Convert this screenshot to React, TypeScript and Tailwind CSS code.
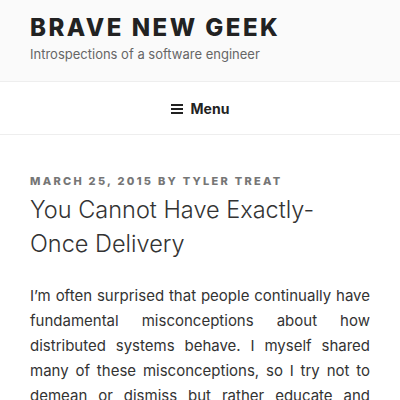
import React from "react";

const lines = [
  "I\u2019m often surprised that people continually have",
  "fundamental misconceptions about how",
  "distributed systems behave. I myself shared",
  "many of these misconceptions, so I try not to",
  "demean or dismiss but rather educate and",
];

export default function App() {
  return (
    <div className="w-[400px] h-[400px] overflow-hidden bg-white" style={{ fontFamily: "Inter, 'Noto Sans', sans-serif" }}>
      <header className="bg-[#fafafa] border-b border-[#eee] px-[30px] pt-[15px] pb-[17px]">
        <h1 className="text-[24px] leading-[26px] font-extrabold uppercase tracking-[0.104em] text-[#222]">Brave New Geek</h1>
        <p className="mt-[3px] text-[13px] leading-[20px] text-[#666]">Introspections of a software engineer</p>
      </header>
      <nav className="h-[53px] border-b border-[#eee] flex items-center justify-center gap-[8px] text-[#222]">
        <svg width="12" height="10" viewBox="0 0 12 10" className="mt-[1px]">
          <rect x="0" y="0" width="12" height="2" fill="#222" />
          <rect x="0" y="4" width="12" height="2" fill="#222" />
          <rect x="0" y="8" width="12" height="2" fill="#222" />
        </svg>
        <span className="text-[14px] font-bold">Menu</span>
      </nav>
      <main className="px-[30px] pt-[38px]">
        <div className="text-[11px] leading-[16px] font-extrabold uppercase tracking-[0.207em] text-[#767676]">
          March 25, 2015 by Tyler Treat
        </div>
        <h2 className="mt-[4px] text-[23.5px] leading-[34px] font-light text-[#333]">
          You Cannot Have Exactly-
          <br />
          Once Delivery
        </h2>
        <div className="mt-[22px] text-[15px] leading-[25px] text-[#333]">
          {lines.map((l, i) => (
            <div key={i} className="text-justify [text-align-last:justify]">{l}</div>
          ))}
        </div>
      </main>
    </div>
  );
}
